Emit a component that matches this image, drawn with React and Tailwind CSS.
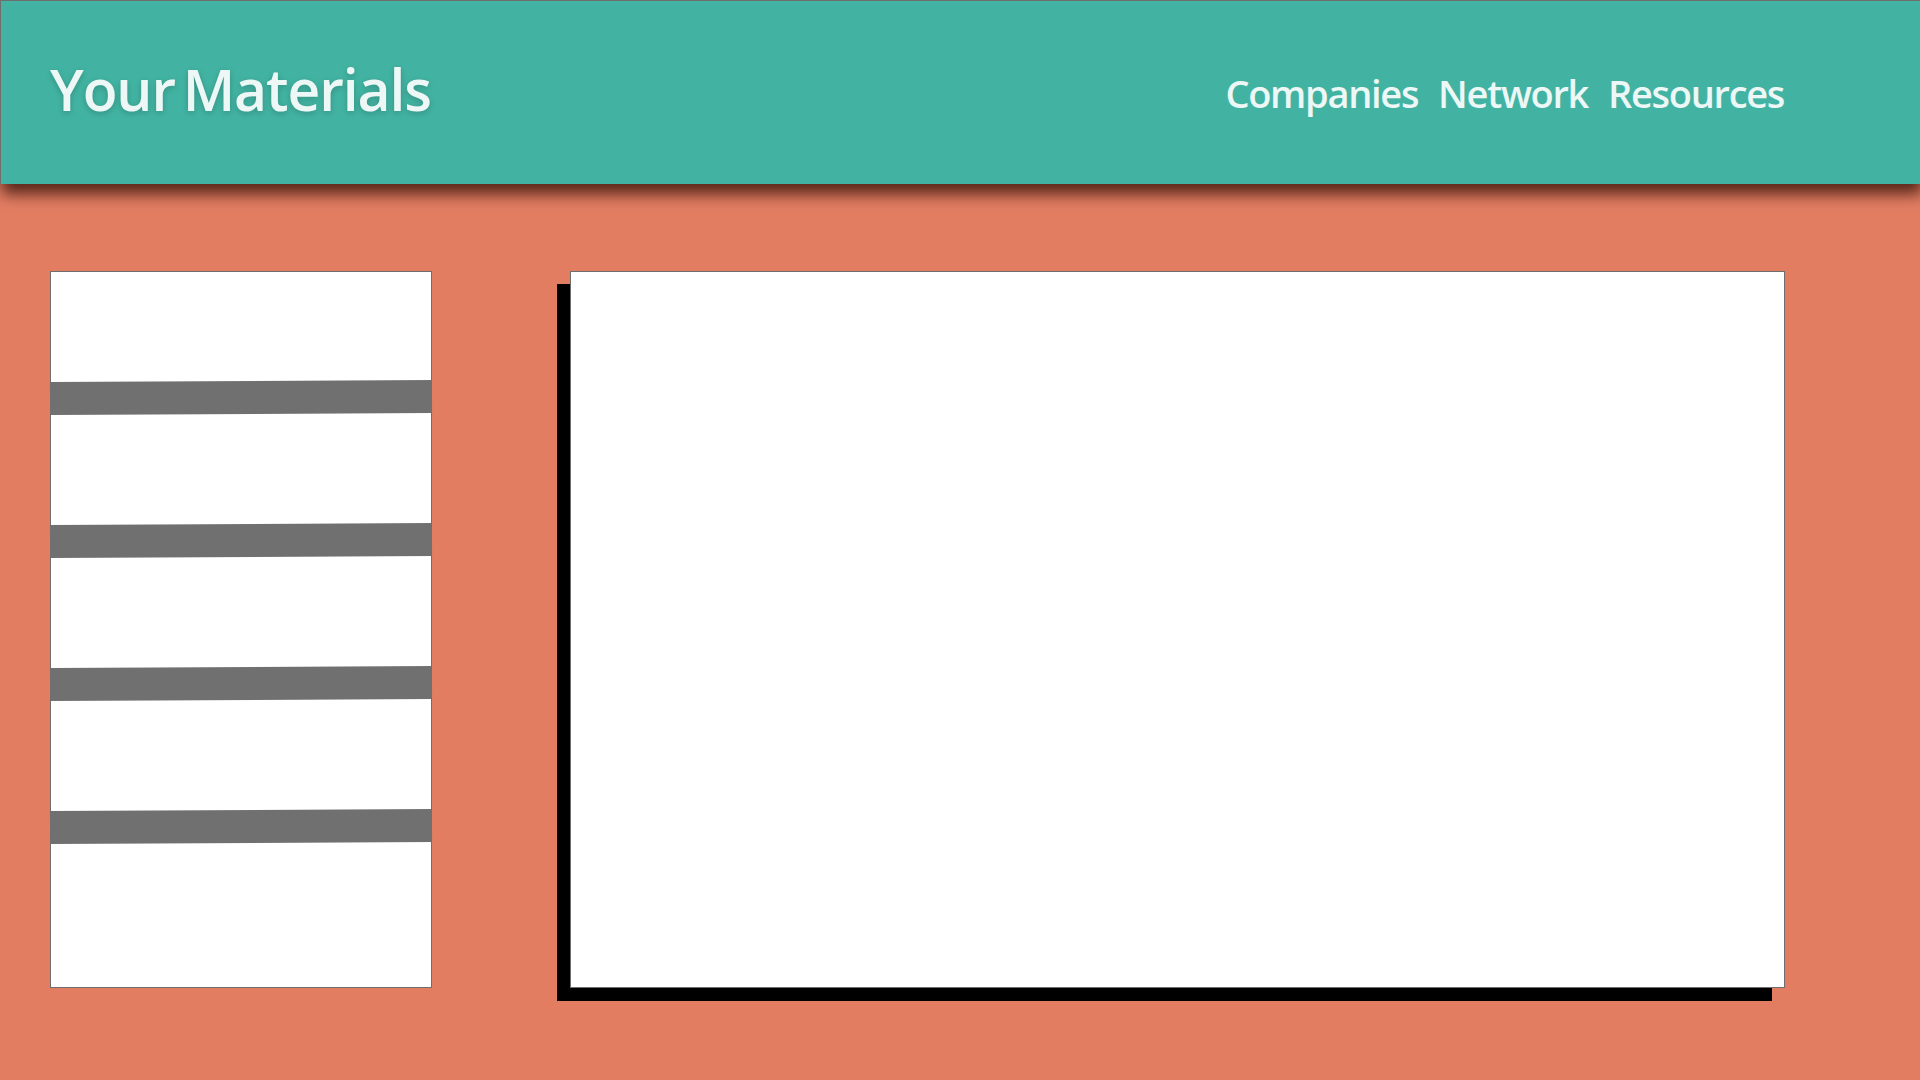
import React from "react";

const font = { fontFamily: '"Open Sans", "Noto Sans", sans-serif' };

function Header() {
  return (
    <header
      className="relative z-10 flex h-[184px] items-start justify-between border-l border-t border-[#6e6e6e] bg-[#42b3a2] pl-[49px] pr-[136px] shadow-[2px_10px_14px_rgba(40,10,0,0.75)]"
      style={font}
    >
      <h1 className="mt-[60px] text-[57px] font-semibold leading-none tracking-[-1.1px] [word-spacing:-6px] text-[#ecf7f6] [text-shadow:0_2px_6px_rgba(0,0,0,0.2)]">
        Your Materials
      </h1>
      <nav className="mt-[73px] flex gap-[20px] text-[38px] font-semibold leading-none tracking-[-1.3px] text-[#ecf7f6]">
        <a>Companies</a>
        <a>Network</a>
        <a>Resources</a>
      </nav>
    </header>
  );
}

function Sidebar() {
  const bars = [0, 1, 2, 3];
  return (
    <aside className="flex h-[717px] w-[382px] shrink-0 flex-col border border-[#6e6e6e] bg-white pt-[109px]">
      {bars.map((b) => (
        <div
          key={b}
          className="-mx-px mb-[110px] h-[33px] -rotate-[0.3deg] bg-[#707070]"
        />
      ))}
    </aside>
  );
}

export default function App() {
  return (
    <div className="min-h-screen w-full overflow-hidden bg-[#e27d62]">
      <Header />
      <main className="flex items-start gap-[138px] pl-[50px] pt-[87px]">
        <Sidebar />
        <section className="h-[717px] w-[1215px] border border-[#6e6e6e] bg-white shadow-[-13px_13px_0_0_#000]" />
      </main>
    </div>
  );
}
